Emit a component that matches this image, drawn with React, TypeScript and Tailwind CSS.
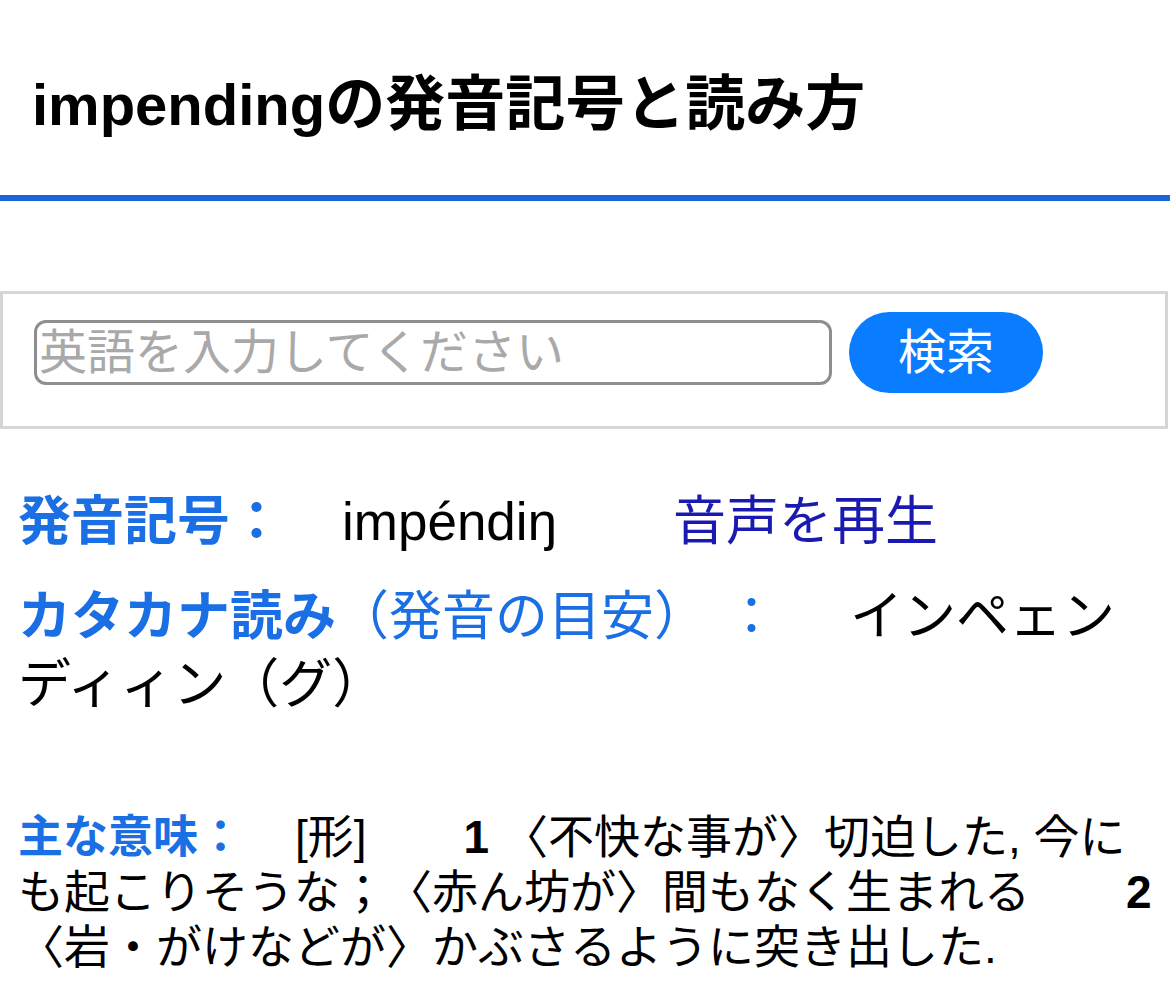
export default function App() {
  const font = { fontFamily: '"Liberation Sans", "Noto Sans CJK JP", sans-serif' }
  return (
    <div className="min-h-screen bg-white text-black [text-spacing-trim:space-all]" style={font}>
      <header className="px-[32px] pt-[70px] pb-[55px]">
        <h1 className="text-[58px] font-bold leading-[70px]">
          impending<span className="text-[60px]">の発音記号と読み方</span>
        </h1>
      </header>
      <div className="h-[6px] bg-[#1a66d9]" />

      <form className="mt-[90px] mr-[2px] border-[3px] border-[#d6d6d6] pl-[31px] pt-[18px] pb-[33px] flex items-center">
        <input
          type="text"
          placeholder="英語を入力してください"
          className="w-[798px] h-[65px] border-[3px] border-[#8e8e8e] rounded-[12px] px-[2px] text-[48px] placeholder:text-[#a9a9a9] outline-none"
          style={font}
        />
        <button
          type="button"
          className="ml-[17px] w-[194px] h-[81px] rounded-full bg-[#0a7cff] text-white text-[48px]"
          style={font}
        >
          検索
        </button>
      </form>

      <div className="pl-[18px] pr-[10px]">
        <div className="mt-[59px] text-[53px] leading-[68px]">
          <span className="font-bold text-[#1b6fe4]">発音記号：</span>
          <span className="ml-[59px]">impéndiŋ</span>
          <a className="ml-[116px] text-[#1a1ab0]">音声を再生</a>
        </div>

        <div className="mt-[27px] text-[53px] leading-[68px]">
          <span className="font-bold text-[#1b6fe4]">カタカナ読み</span>
          <span className="text-[#1b6fe4]">（発音の目安）</span>
          <span className="ml-[18px] text-[#1b6fe4]">：</span>
          <span className="ml-[72px]">インペェンディィン（グ）</span>
        </div>

        <div className="mt-[91px] text-[46px] leading-[55px]">
          <span className="text-[45px] font-bold text-[#1b6fe4]">主な意味：</span>
          <span className="ml-[52px]">[形]</span>
          <span className="ml-[97px] font-bold">1</span>{' '}
          〈不快な事が〉切迫した, 今にも起こりそうな；〈赤ん坊が〉間もなく生まれる
          <span className="ml-[96px] font-bold">2</span>
          〈岩・がけなどが〉かぶさるように突き出した.
        </div>
      </div>
    </div>
  )
}
